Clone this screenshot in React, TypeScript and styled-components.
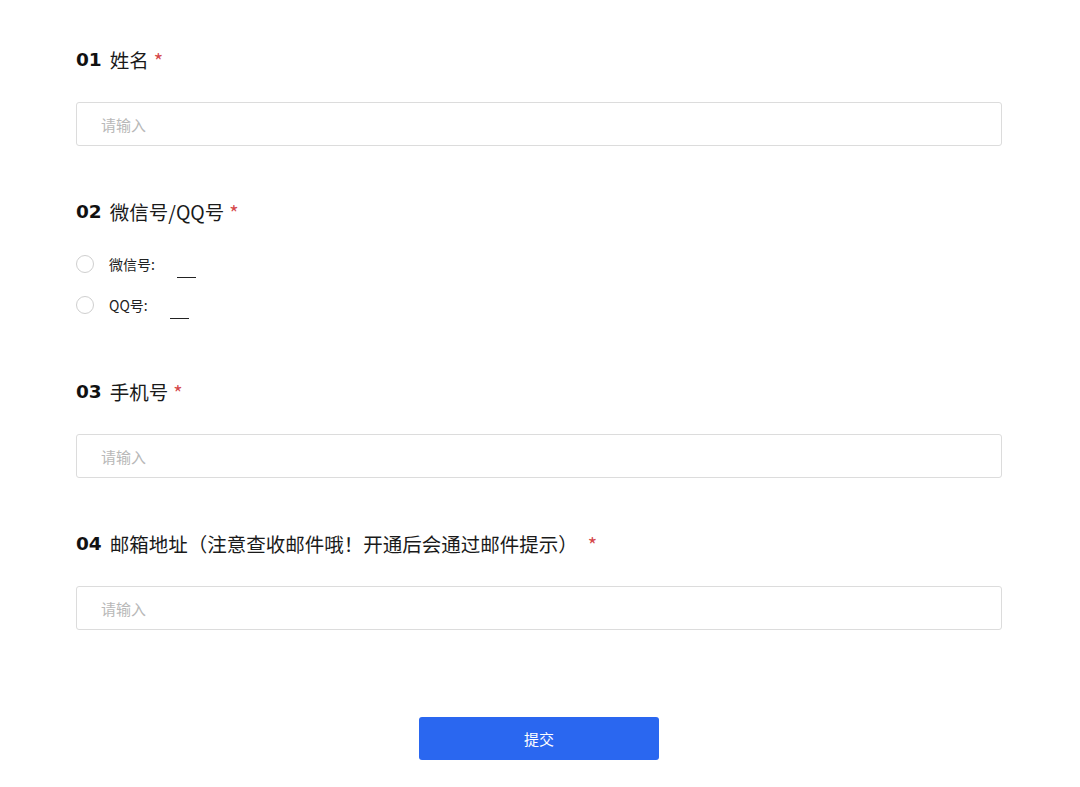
import styled, { createGlobalStyle } from 'styled-components';

const GlobalStyle = createGlobalStyle`
  html, body {
    margin: 0;
    padding: 0;
    background: #ffffff;
  }
  body {
    font-family: "Noto Sans CJK SC", "Noto Sans", sans-serif;
    color: #1a1a1a;
  }
`;

const Page = styled.div`
  width: 1080px;
  padding: 48px 0 0 76px;
  box-sizing: border-box;
`;

const Form = styled.form`
  width: 926px;
  display: flex;
  flex-direction: column;
`;

const Section = styled.div<{ $gap: number }>`
  display: flex;
  flex-direction: column;
  margin-bottom: ${(p) => p.$gap}px;
`;

const Title = styled.div`
  display: flex;
  align-items: center;
  height: 24px;
  font-size: 19.5px;
  line-height: 24px;
  color: #1a1a1a;
  margin-bottom: 30px;
`;

const Num = styled.span`
  font-family: "DejaVu Sans", "Noto Sans", sans-serif;
  font-weight: 700;
  font-size: 18.5px;
  color: #111;
  margin-right: 8px;
`;

const Star = styled.span<{ $space?: number }>`
  color: #d5484a;
  font-size: 20px;
  margin-left: ${(p) => p.$space ?? 5}px;
  margin-top: 2px;
`;

const Input = styled.input`
  width: 100%;
  height: 44px;
  box-sizing: border-box;
  border: 1px solid #dcdcdc;
  border-radius: 3px;
  padding: 0 24px;
  font-family: "Noto Sans CJK SC", sans-serif;
  font-size: 15px;
  outline: none;
  &::placeholder {
    color: #b8b8b8;
  }
`;

const Options = styled.div`
  display: flex;
  flex-direction: column;
  gap: 11px;
  margin-top: -5px;
`;

const Option = styled.label`
  display: flex;
  align-items: center;
  height: 30px;
  font-size: 14px;
  color: #222;
`;

const Radio = styled.span`
  width: 18px;
  height: 18px;
  box-sizing: border-box;
  border: 1px solid #cfcfcf;
  border-radius: 50%;
  margin-right: 15px;
`;

const Blank = styled.span<{ $w: number }>`
  display: inline-block;
  width: ${(p) => p.$w}px;
  height: 18px;
  border-bottom: 1px solid #222;
  margin-left: 22px;
  margin-top: 8px;
`;

const Submit = styled.button`
  align-self: center;
  width: 240px;
  height: 43px;
  border: none;
  border-radius: 3px;
  background: #2a67f0;
  color: #ffffff;
  font-family: "Noto Sans CJK SC", sans-serif;
  font-size: 15px;
  margin-top: 87px;
  cursor: pointer;
`;

export default function App() {
  return (
    <Page>
      <GlobalStyle />
      <Form onSubmit={(e) => e.preventDefault()}>
        <Section $gap={54}>
          <Title>
            <Num>01</Num>姓名<Star>*</Star>
          </Title>
          <Input placeholder="请输入" />
        </Section>
        <Section $gap={60}>
          <Title>
            <Num>02</Num>微信号/QQ号<Star>*</Star>
          </Title>
          <Options>
            <Option>
              <Radio />
              微信号:
              <Blank $w={19} />
            </Option>
            <Option>
              <Radio />
              QQ号:
              <Blank $w={19} />
            </Option>
          </Options>
        </Section>
        <Section $gap={54}>
          <Title>
            <Num>03</Num>手机号<Star>*</Star>
          </Title>
          <Input placeholder="请输入" />
        </Section>
        <Section $gap={0}>
          <Title>
            <Num>04</Num>邮箱地址（注意查收邮件哦！开通后会通过邮件提示）<Star $space={10}>*</Star>
          </Title>
          <Input placeholder="请输入" />
        </Section>
        <Submit type="submit">提交</Submit>
      </Form>
    </Page>
  );
}
